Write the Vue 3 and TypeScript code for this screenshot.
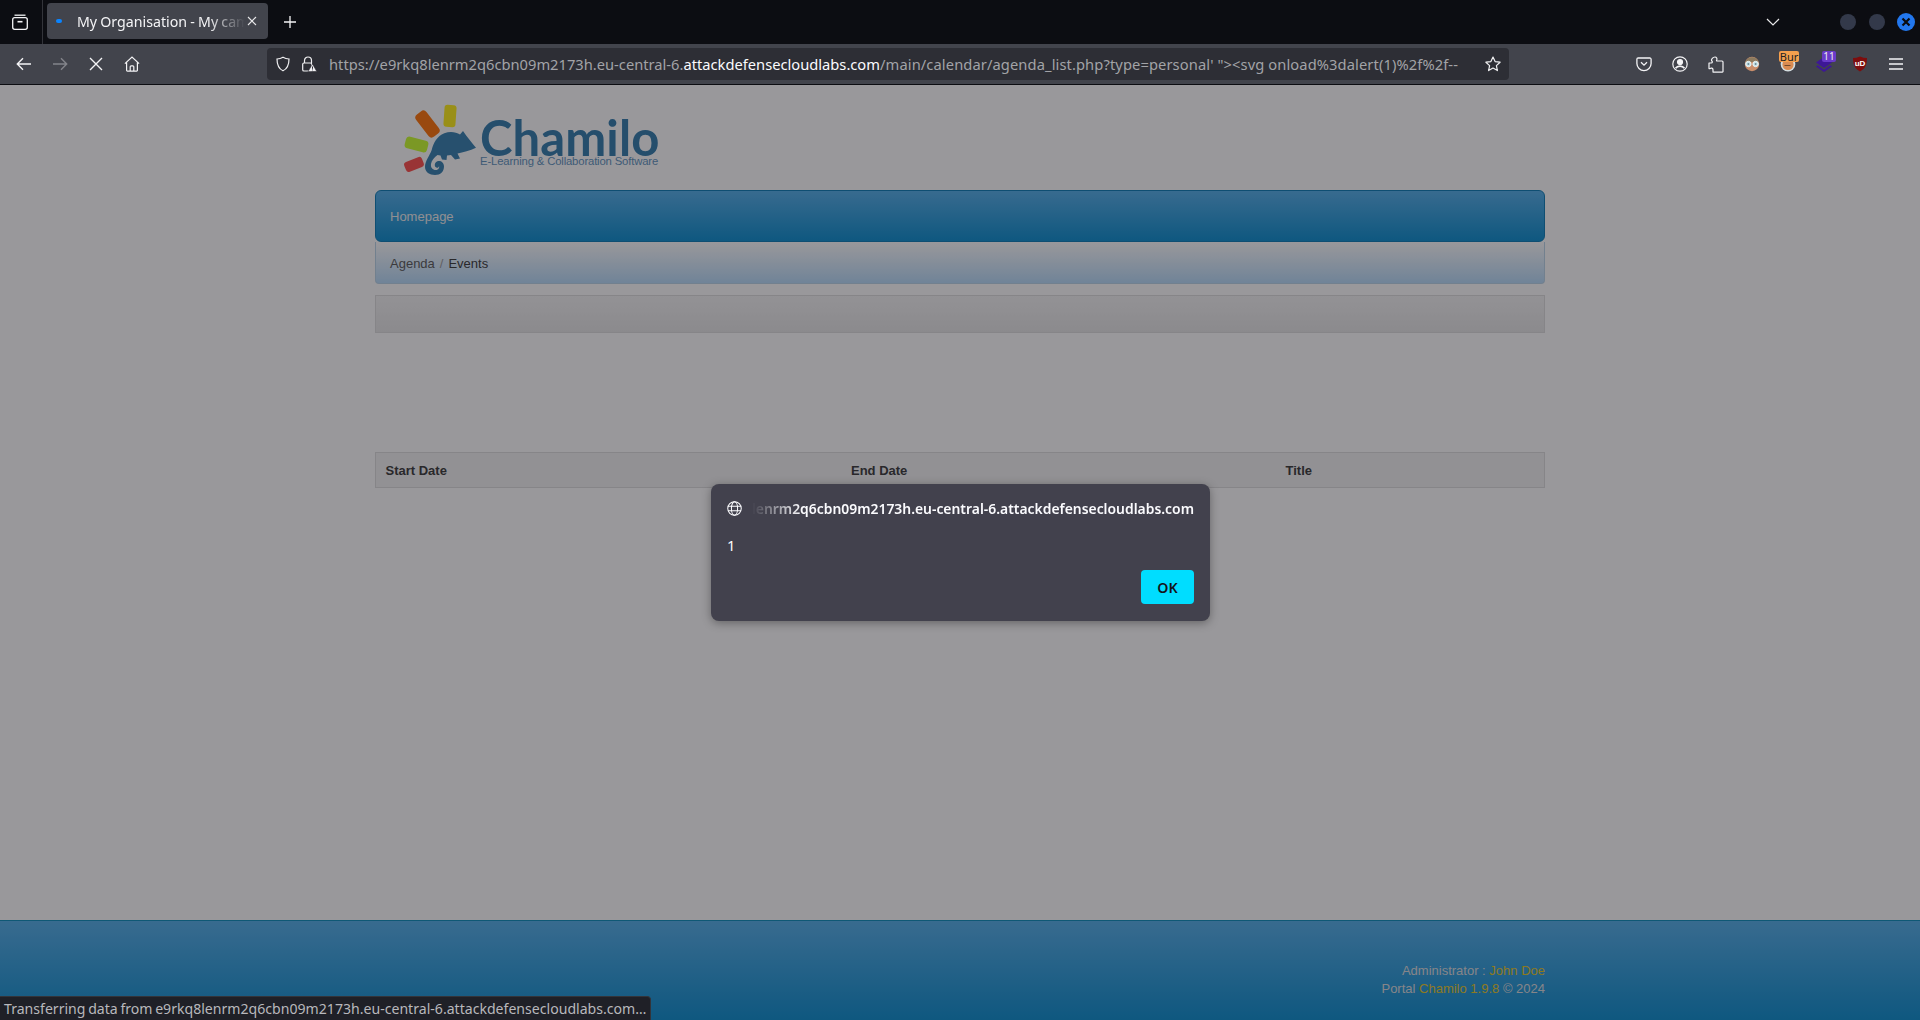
<script setup lang="ts">
const columns: { label: string; width: string }[] = [
  { label: 'Start Date', width: '465.5px' },
  { label: 'End Date', width: '434.5px' },
  { label: 'Title', width: '1fr' },
]
</script>

<template>
  <div class="window">
    <header class="tabbar">
      <button class="tb-btn first" aria-label="List all tabs">
        <svg width="18" height="18" viewBox="0 0 18 18" fill="none" stroke="#f4f4f6" stroke-width="1.3">
          <path d="M3.5 2.2h11" />
          <rect x="1.7" y="4.7" width="14.6" height="11.6" rx="2" />
          <path d="M6.5 8.7h5" stroke-width="1.6" />
        </svg>
      </button>
      <span class="sep"></span>
      <div class="tab">
        <span class="dot"></span>
        <span class="tab-title">My Organisation - My campus</span>
        <svg class="tab-x" width="10" height="10" viewBox="0 0 10 10" stroke="#e8e8ea" stroke-width="1.1"><path d="M1 1l8 8M9 1l-8 8" /></svg>
      </div>
      <button class="tb-btn plus" aria-label="New tab">
        <svg width="14" height="14" viewBox="0 0 14 14" stroke="#f4f4f6" stroke-width="1.3"><path d="M7 1v12M1 7h12" /></svg>
      </button>
      <span class="grow"></span>
      <svg class="chev" width="14" height="8" viewBox="0 0 14 8" fill="none" stroke="#e8e8ea" stroke-width="1.2"><path d="M1 1l6 6 6-6" /></svg>
      <span class="win"></span>
      <span class="win"></span>
      <span class="win close">
        <svg width="10" height="10" viewBox="0 0 10 10" stroke="#0b0c10" stroke-width="2.2"><path d="M1.5 1.5l7 7M8.5 1.5l-7 7" /></svg>
      </span>
    </header>

    <nav class="toolbar">
      <button class="tb-btn" aria-label="Back">
        <svg width="16" height="14" viewBox="0 0 16 14" fill="none" stroke="#f4f4f6" stroke-width="1.4"><path d="M15 7H1.5M7 1.3L1.3 7 7 12.7" /></svg>
      </button>
      <button class="tb-btn" aria-label="Forward">
        <svg width="16" height="14" viewBox="0 0 16 14" fill="none" stroke="#83848a" stroke-width="1.4"><path d="M1 7h13.5M9 1.3L14.7 7 9 12.7" /></svg>
      </button>
      <button class="tb-btn" aria-label="Stop">
        <svg width="14" height="14" viewBox="0 0 14 14" stroke="#f4f4f6" stroke-width="1.4"><path d="M1 1l12 12M13 1L1 13" /></svg>
      </button>
      <button class="tb-btn" aria-label="Home">
        <svg width="16" height="16" viewBox="0 0 16 16" fill="none" stroke="#f4f4f6" stroke-width="1.2"><path d="M.9 7.6L8 1l7.1 6.6M2.6 6.2v8.1a.8.8 0 0 0 .8.8h9.2a.8.8 0 0 0 .8-.8V6.2M6.2 15v-4.2a1 1 0 0 1 1-1h1.6a1 1 0 0 1 1 1V15" /></svg>
      </button>

      <div class="urlbar">
        <svg class="u-shield" width="16" height="16" viewBox="0 0 16 16" fill="none" stroke="#f0f0f2" stroke-width="1.2"><path d="M8 1.2c2 1.2 4 1.7 6 1.8 0 5.800-1.600 9.800-6 11.800C3.600 12.800 2 8.800 2 3c2-.1 4-.6 6-1.800z" /></svg>
        <svg class="u-lock" width="16" height="16" viewBox="0 0 16 16">
          <path d="M3.500 7V4.500a3.500 3.500 0 0 1 7 0V7" fill="none" stroke="#f0f0f2" stroke-width="1.2" />
          <rect x="1.700" y="7" width="9" height="8" rx="1.300" fill="none" stroke="#f0f0f2" stroke-width="1.200" />
          <path d="M11.500 8l4.300 7.500H7z" fill="#f0f0f2" stroke="#2b2a33" stroke-width=".6" />
          <path d="M11.500 10.500v2.300M11.500 13.500v.8" stroke="#2b2a33" stroke-width="1" />
        </svg>
        <span class="url"><span class="dim">https://e9rkq8lenrm2q6cbn09m2173h.eu-central-6.</span><span class="host">attackdefensecloudlabs.com</span><span class="dim tail">/main/calendar/agenda_list.php?type=personal' "&gt;&lt;svg onload%3dalert(1)%2f%2f--</span></span>
        <svg class="u-star" width="16" height="16" viewBox="0 0 16 16" fill="none" stroke="#f0f0f2" stroke-width="1.200" stroke-linejoin="round"><path d="M8 1l2.100 4.600 5 .6-3.700 3.400 1 5L8 12.100 3.600 14.600l1-5L.9 6.200l5-.6z" /></svg>
      </div>

      <span class="grow"></span>

      <button class="tb-btn" aria-label="Pocket">
        <svg width="16" height="16" viewBox="0 0 16 16" fill="none" stroke="#f4f4f6" stroke-width="1.300"><path d="M2.200 2h11.600a1.300 1.300 0 0 1 1.300 1.300v4.200a7.100 7.100 0 0 1-14.200 0V3.300A1.300 1.300 0 0 1 2.200 2z" /><path d="M5 6.200l3 2.900 3-2.900" /></svg>
      </button>
      <button class="tb-btn" aria-label="Account">
        <svg width="16" height="16" viewBox="0 0 16 16" fill="none" stroke="#f4f4f6" stroke-width="1.200"><circle cx="8" cy="8" r="7.200" /><circle cx="8" cy="6" r="2.500" fill="#f4f4f6" /><path d="M3.600 12.300c1-1.500 2.500-2.200 4.400-2.200s3.400.7 4.400 2.200" stroke-width="1.800" /></svg>
      </button>
      <button class="tb-btn" aria-label="Extensions">
        <svg width="16" height="18" viewBox="0 0 16 18" fill="none" stroke="#f4f4f6" stroke-width="1.200" stroke-linejoin="round"><path d="M1 8h2.300c1.200-.1 1.400-1.500.3-2.200C2.900 4.600 5 2 7 2c1.500 0 2.400 1.600 1.700 3-.4.700-.2 1 .5 1H14a1 1 0 0 1 1 1v9.500a.6.600 0 0 1-.6.600H5v-2.300c0-1.800-2-2.200-3-1.200H1z" /></svg>
      </button>
      <button class="tb-btn" aria-label="Glasses extension">
        <svg width="16" height="16" viewBox="0 0 16 16">
          <circle cx="8" cy="8" r="7.200" fill="#c98d6a" />
          <path d="M1.500 6a6.800 6.800 0 0 1 13 0z" fill="#8c7a5f" />
          <circle cx="4.400" cy="8" r="2.700" fill="#c7e3ea" stroke="#e8f2f4" />
          <circle cx="11.600" cy="8" r="2.700" fill="#c7e3ea" stroke="#e8f2f4" />
          <circle cx="4.400" cy="8" r="1" fill="#6b8a96" />
          <circle cx="11.600" cy="8" r="1" fill="#6b8a96" />
        </svg>
      </button>
      <button class="tb-btn badged" aria-label="Burp">
        <svg width="16" height="16" viewBox="0 0 16 16"><circle cx="8" cy="8" r="7.400" fill="#d4dde0" /><circle cx="8" cy="8.500" r="5.600" fill="#d98b52" /><path d="M4.500 9.500h6" stroke="#5b3a22" stroke-width=".8" /></svg>
        <span class="badge burp">Bur</span>
      </button>
      <button class="tb-btn badged" aria-label="Layers">
        <svg width="16" height="16" viewBox="0 0 16 16" fill="#3d1796"><path d="M8 1l8 5.500-8 5.500-8-5.500z" /><path d="M1.600 9.300L8 13.700l6.400-4.400 1.600 1.100L8 16 0 10.400z" /></svg>
        <span class="badge purple">11</span>
      </button>
      <button class="tb-btn" aria-label="uBlock Origin">
        <svg width="16" height="16" viewBox="0 0 16 16"><path d="M8 .6c2.300 1 4.600 1.500 7 1.500 0 6-1.600 11-7 13.300C2.600 13.100 1 8.100 1 2.100c2.400 0 4.700-.5 7-1.500z" fill="#7e0d0d" /></svg>
        <span class="ub">uD</span>
      </button>
      <button class="tb-btn" aria-label="Menu">
        <svg width="14" height="12" viewBox="0 0 14 12" stroke="#f4f4f6" stroke-width="1.400"><path d="M0 1h14M0 6h14M0 11h14" /></svg>
      </button>
    </nav>

    <main class="page">
      <div class="content">
        <div class="logo">
          <svg class="mark" width="85" height="90" viewBox="0 0 85 90">
            <rect x="49" y="10" width="12" height="22" rx="3" fill="#ffee11" transform="rotate(4 55 21)" />
            <rect x="26" y="15" width="13" height="28" rx="4" fill="#ff7000" transform="rotate(-38 32.500 29)" />
            <rect x="10" y="43.500" width="23" height="12" rx="3.500" fill="#c8ff28" transform="rotate(15 21.500 49.500)" />
            <rect x="9.500" y="64.200" width="19" height="10.500" rx="3" fill="#ff4a45" transform="rotate(-22 19 69.500)" />
            <path fill="#307cae" d="M81 52.700C77 48 72 42 68 36L65 39.500C61 37 55 36 49.300 38.300 42 41 38.500 48 36.700 55 34.500 61 30 66 30 72 30 77 34.500 80 40 80 45.500 80 49 76.500 49 71.500 49 67.500 46 65.500 43 66 40 66.700 39 70 40.500 72 41.500 73.300 44 73 44 71 44.600 72.500 43.500 75 41 75 37.500 75 35.500 72.500 36 69 36.500 65.500 39 62.500 42.500 60L45.500 60.500 47 64.500 51.500 65 52 60.500 56 60 60 64.500 65 63.500 62.500 58.500C68 57.500 75 55.500 81 52.700Z" />
          </svg>
          <div class="wordmark">
            <span class="name">Chamilo</span>
            <span class="tag">E-Learning &amp; Collaboration Software</span>
          </div>
        </div>

        <div class="navbar"><a>Homepage</a></div>
        <div class="crumbs"><a>Agenda</a><i>/</i><b>Events</b></div>
        <div class="well"></div>

        <div class="table-head">
          <div v-for="c in columns" :key="c.label" class="th" :style="{ flex: c.width === '1fr' ? '1' : '0 0 ' + c.width }">{{ c.label }}</div>
        </div>
      </div>

      <footer class="foot">
        <div class="foot-inner">
          <p>Administrator : <a>John Doe</a></p>
          <p>Portal <a>Chamilo 1.9.8</a> © 2024</p>
        </div>
      </footer>

      <div class="veil"></div>

      <section class="dialog" role="alertdialog">
        <div class="d-head">
          <svg width="15" height="15" viewBox="0 0 16 16" fill="none" stroke="#fbfbfe" stroke-width="1.100"><circle cx="8" cy="8" r="7.200" /><ellipse cx="8" cy="8" rx="3.300" ry="7.200" /><path d="M1 5.600h14M1 10.400h14" /></svg>
          <span class="d-origin"><span>e9rkq8lenrm2q6cbn09m2173h.eu-central-6.attackdefensecloudlabs.com</span></span>
        </div>
        <div class="d-msg">1</div>
        <div class="d-actions"><button class="ok">OK</button></div>
      </section>

      <div class="status">Transferring data from e9rkq8lenrm2q6cbn09m2173h.eu-central-6.attackdefensecloudlabs.com…</div>
    </main>
  </div>
</template>

<style>
html, body { margin: 0; height: 100%; overflow: hidden; background: #fff; }
</style>

<style scoped>
.window {
  height: 1020px;
  display: flex;
  flex-direction: column;
  font-family: "Noto Sans", "Open Sans", sans-serif;
}
button { background: none; border: 0; padding: 0; font: inherit; }

.tabbar {
  height: 44px;
  flex: none;
  background: #0c0d12;
  display: flex;
  align-items: center;
  padding-right: 5px;
  box-sizing: border-box;
}
.tb-btn {
  width: 36px;
  height: 36px;
  flex: none;
  display: flex;
  align-items: center;
  justify-content: center;
  position: relative;
}
.tb-btn.first { margin-left: 2px; width: 36px; margin-top: -1px; }
.sep { width: 1px; height: 44px; background: #33343a; margin: 0 4px; }
.tab {
  width: 221px;
  height: 36px;
  margin-top: -2px;
  background: #42444c;
  border-radius: 4px;
  display: flex;
  align-items: center;
  position: relative;
  box-sizing: border-box;
  padding-left: 30px;
  flex: none;
}
.dot {
  position: absolute;
  left: 9px;
  top: 16px;
  width: 6px;
  height: 4px;
  border-radius: 3px;
  background: #0a84ff;
}
.tab-title {
  width: 168px;
  overflow: hidden;
  white-space: nowrap;
  font-size: 14.2px;
  word-spacing: -.5px;
  color: #f4f4f6;
  -webkit-mask-image: linear-gradient(90deg, #000 78%, transparent 100%);
  mask-image: linear-gradient(90deg, #000 78%, transparent 100%);
}
.tab-x { position: absolute; right: 11px; top: 13px; }
.plus { margin-left: 4px; margin-top: -1px; }
.grow { flex: 1; }
.chev { margin-right: 60px; margin-top: -1px; }
.win {
  width: 16px;
  height: 16px;
  border-radius: 50%;
  background: #33394a;
  margin-right: 13px;
  display: flex;
  align-items: center;
  justify-content: center;
  flex: none;
}
.win.close { width: 18px; height: 18px; background: #2277ee; margin-right: 0; margin-left: -1px; }

.toolbar {
  height: 41px;
  flex: none;
  background: #42444c;
  border-bottom: 1px solid #0c0d12;
  box-sizing: border-box;
  display: flex;
  align-items: center;
  padding: 0 6px;
}
.urlbar {
  margin-left: 117px;
  width: 1242px;
  height: 32px;
  flex: none;
  background: #2d2e35;
  border-radius: 4px;
  display: flex;
  align-items: center;
  box-sizing: border-box;
  padding-left: 8px;
  padding-right: 8px;
}
.u-lock { margin-left: 10px; }
.url {
  margin-left: 12px;
  font-size: 14.7px;
  white-space: nowrap;
  overflow: hidden;
  flex: 1;
}
.dim { color: #a2a3a7; }
.tail { letter-spacing: .1px; }
.host { color: #fbfbfe; }
.badged { overflow: visible; }
.badge {
  position: absolute;
  top: 5px;
  height: 11px;
  font-size: 11px;
  line-height: 11px;
  border-radius: 2px;
  text-align: center;
}
.burp { left: 9px; width: 20px; background: #f5a04e; color: #222; overflow: hidden; }
.purple { left: 16px; width: 14px; background: #6a3bc9; color: #eee; font-size: 10px; }
.ub {
  position: absolute;
  left: 12px;
  top: 13px;
  width: 12px;
  font: 700 8px/9px "Liberation Sans", sans-serif;
  text-align: center;
  color: #fff;
}

.page {
  flex: 1;
  display: flex;
  flex-direction: column;
  position: relative;
  background: #fff;
  font-family: "Liberation Sans", Arial, sans-serif;
  font-size: 13px;
  color: #333;
  overflow: hidden;
  min-height: 0;
}
.content {
  width: 1170px;
  margin: 0 auto;
  flex: 1;
}
.logo {
  height: 90px;
  margin: 10px 0 5px 20px;
  display: flex;
}
.mark { flex: none; }
.wordmark {
  display: flex;
  flex-direction: column;
  padding-top: 26.5px;
}
.name {
  font-family: Lato, sans-serif;
  font-size: 49px;
  font-weight: 700;
  line-height: 30px;
  letter-spacing: .1px;
  color: #2c78aa;
}
.tag {
  font-family: "Liberation Sans", sans-serif;
  font-size: 11.3px;
  line-height: 12px;
  margin-top: 3px;
  letter-spacing: -.15px;
  white-space: nowrap;
  color: #5a90bc;
}
.navbar {
  height: 52px;
  box-sizing: border-box;
  border: 1px solid #0479b4;
  border-radius: 6px;
  background: linear-gradient(#4fade9, #048acd);
  display: flex;
  align-items: center;
  padding-left: 14px;
  color: #eee;
}
.crumbs {
  height: 42px;
  box-sizing: border-box;
  border: 1px solid #b8d3e8;
  border-top: 0;
  border-radius: 0 0 4px 4px;
  background: linear-gradient(#fff, #b5daf9);
  display: flex;
  align-items: center;
  padding: 1px 0 0 14px;
  color: #555;
}
.crumbs i { font-style: normal; color: #999; margin: 0 5px; }
.crumbs b { font-weight: 400; color: #333; }
.well {
  height: 38px;
  margin-top: 11px;
  box-sizing: border-box;
  border: 1px solid #dcdcdc;
  background: linear-gradient(#f4f4f4, #e6e6e6);
}
.table-head {
  margin-top: 119px;
  height: 36px;
  box-sizing: border-box;
  border: 1px solid #ddd;
  background: #f2f2f2;
  display: flex;
  align-items: center;
}
.th { font-weight: 700; padding-left: 9.5px; box-sizing: border-box; color: #333; }
.foot {
  height: 100px;
  flex: none;
  box-sizing: border-box;
  border-top: 1px solid #048abb;
  background: linear-gradient(#4fade9, #048acd);
}
.foot-inner {
  width: 1170px;
  margin: 41px auto 0;
  text-align: right;
  color: #ddd;
  font-size: 13px;
  line-height: 18px;
}
.foot-inner p { margin: 0; }
.foot-inner a { color: #e8c81c; }

.veil {
  position: absolute;
  inset: 0;
  background: rgba(28, 27, 34, .45);
}
.dialog {
  position: absolute;
  left: 711px;
  top: 399px;
  width: 499px;
  height: 137px;
  box-sizing: border-box;
  background: #42414d;
  border-radius: 8px;
  box-shadow: 0 2px 10px rgba(0, 0, 0, .35);
  color: #fbfbfe;
  font-family: "Noto Sans", "Open Sans", sans-serif;
  padding: 15px 16px 16px;
}
.d-head { display: flex; align-items: center; height: 18px; }
.d-origin {
  flex: 1;
  margin-left: 10px;
  overflow: hidden;
  white-space: nowrap;
  display: flex;
  justify-content: flex-end;
  font-size: 13.9px;
  font-weight: 600;
  -webkit-mask-image: linear-gradient(90deg, transparent 0, #000 50px);
  mask-image: linear-gradient(90deg, transparent 0, #000 50px);
}
.d-origin span { flex: none; }
.d-msg { font-size: 14.7px; margin-top: 18px; line-height: 20px; }
.d-actions { display: flex; justify-content: flex-end; margin-top: 15px; }
.ok {
  width: 53px;
  height: 34px;
  border-radius: 4px;
  background: #00ddff;
  color: #15141a;
  font-size: 14.2px;
  font-weight: 600;
}
.status {
  position: absolute;
  left: 0;
  bottom: 0;
  width: 651px;
  height: 24px;
  box-sizing: border-box;
  padding-left: 4px;
  background: #1f2027;
  border: 1px solid #33343a;
  border-width: 1px 1px 0 0;
  border-radius: 0 4px 0 0;
  color: #b8b8bc;
  font-family: "Noto Sans", "Open Sans", sans-serif;
  font-size: 14.1px;
  word-spacing: -1px;
  line-height: 23px;
  white-space: nowrap;
  overflow: hidden;
}
</style>
